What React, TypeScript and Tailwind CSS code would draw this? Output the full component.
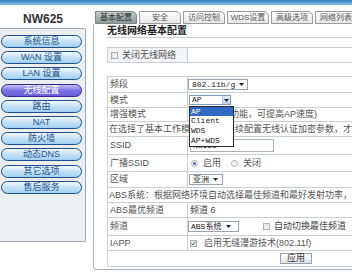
import React from "react";

const sans = "font-['Liberation_Sans','Noto_Sans_CJK_SC',sans-serif]";
const mono = "font-['Liberation_Mono','Noto_Sans_CJK_SC',monospace]";

const menu = ["系统信息", "WAN 设置", "LAN 设置", "无线配置", "路由", "NAT", "防火墙", "动态DNS", "其它选项", "售后服务"];
const tabs = ["基本配置", "安全", "访问控制", "WDS设置", "高级选项", "网络列表"];

function Arrow() {
  return (
    <svg width="5" height="3" viewBox="0 0 5 3" className="shrink-0">
      <path d="M0 0h5L2.5 3z" fill="#222" />
    </svg>
  );
}

function Checkbox({ checked }: { checked?: boolean }) {
  return (
    <span className="w-[7px] h-[7px] border border-[#a9b1b9] bg-gradient-to-br from-[#dfe3e7] to-[#f7f8f9] flex items-center justify-center shrink-0">
      {checked && (
        <svg width="5" height="5" viewBox="0 0 5 5">
          <path d="M0.5 2.5l1.3 1.5L4.5 0.8" stroke="#3a6a3a" strokeWidth="1" fill="none" />
        </svg>
      )}
    </span>
  );
}

function Radio({ checked }: { checked?: boolean }) {
  return (
    <span className="w-[7px] h-[7px] rounded-full border border-[#a9b1b9] bg-[#f2f4f6] flex items-center justify-center shrink-0">
      {checked && <span className="w-[3px] h-[3px] rounded-full bg-[#4b6fa8]" />}
    </span>
  );
}

function Label({ children }: { children: React.ReactNode }) {
  return <div className="w-[80px] shrink-0 border-r border-[#c6ced6] pl-[2px] flex items-center">{children}</div>;
}

export default function App() {
  return (
    <div className={`relative w-[352px] h-[279px] overflow-hidden bg-white text-[9px] leading-none text-[#555] ${sans}`}>
      <div className="h-[5px] bg-gradient-to-b from-[#2b7dbd] to-[#86c0e8]" />
      <div className="flex">
        {/* side menu */}
        <div className="w-[86px] shrink-0">
          <div className="h-[23px] pt-[4px] flex items-center justify-center text-[12px] font-bold text-[#333]">NW625</div>
          <div className="h-[214px] border-y border-r border-[#9ea8b2] bg-[#eceff2] rounded-r-[2px] pt-[6px] pl-[1px] flex flex-col gap-[3.2px]">
            {menu.map((m) => (
              <div
                key={m}
                className={
                  m === "无线配置"
                    ? "h-[13px] w-[81px] rounded-full border border-[#332a8c] bg-gradient-to-b from-[#c3bdf7] via-[#7d72e3] to-[#6a5fd6] text-white flex items-center justify-center"
                    : "h-[13px] w-[81px] rounded-full border border-[#1d4f8c] bg-gradient-to-b from-[#f2f9ff] via-[#c2e1f7] to-[#a2d0f1] text-[#24548c] flex items-center justify-center"
                }
              >
                {m}
              </div>
            ))}
          </div>
        </div>

        {/* main */}
        <div className="flex-1 ml-[7px]">
          <div className="mt-[6px] h-[13px] pl-[2px] flex gap-[2px]">
            {tabs.map((t, i) => (
              <div
                key={t}
                className={
                  i === 0
                    ? "w-[42px] shrink-0 rounded-tr-[5px] border border-[#7d8686] bg-gradient-to-b from-[#c2c9c9] to-[#8f9999] text-[#2a2a2a] text-[8px] flex items-center justify-center"
                    : "w-[42px] shrink-0 rounded-tr-[5px] border border-[#9a9a9a] bg-gradient-to-b from-white to-[#e6e6e6] text-[#555] text-[8px] flex items-center justify-center"
                }
              >
                {t}
              </div>
            ))}
          </div>

          <div className="h-[246px] border-l border-b border-[#a9b1b9] rounded-bl-[4px] pl-[13px]">
            <div className="h-[14px] border-b border-[#c6ced6] flex items-center text-[10px] font-bold text-[#222]">无线网络基本配置</div>

            <div className="mt-[9px] w-[378px] h-[16px] border border-[#c6ced6] flex">
              <div className="w-[80px] shrink-0 border-r border-[#c6ced6] bg-[#f3f4f5] pl-[3px] flex items-center gap-[4px]">
                <Checkbox />
                <span>关闭无线网络</span>
              </div>
              <div className="flex-1" />
            </div>

            <div className="mt-[13px] w-[378px] border-t border-l border-r border-[#c6ced6]">
              <div className="h-[16px] border-b border-[#c6ced6] flex">
                <Label>频段</Label>
                <div className="pl-[0px] flex items-center">
                  <div className={`w-[60px] h-[11px] border border-[#9aa4ae] bg-white flex items-center px-[3px] gap-[4px] text-[8px] text-[#222] ${mono}`}>
                    <span>802.11b/g</span>
                    <Arrow />
                  </div>
                </div>
              </div>

              <div className="h-[15px] border-b border-[#c6ced6] flex">
                <Label>模式</Label>
                <div className="pl-[1px] flex items-center">
                  <div className="relative">
                    <div className={`w-[42px] h-[10px] border border-[#7f9db9] bg-white flex items-center text-[8px] text-[#222] ${mono}`}>
                      <span className="flex-1 pl-[2px]">AP</span>
                      <span className="w-[8px] h-full bg-gradient-to-b from-[#e6eefc] to-[#b9cdf2] border-l border-[#b3c4e0] flex items-center justify-center">
                        <Arrow />
                      </span>
                    </div>
                    <div className={`absolute left-0 top-[11px] z-10 w-[45px] h-[41px] border border-[#2a2a2a] bg-white text-[8px] text-[#222] ${mono}`}>
                      <div className="h-[9px] bg-[#316ac5] text-white flex items-center pl-[1px]">AP</div>
                      <div className="h-[10px] flex items-center pl-[1px]">Client</div>
                      <div className="h-[10px] flex items-center pl-[1px]">WDS</div>
                      <div className="h-[10px] flex items-center pl-[1px]">AP+WDS</div>
                    </div>
                  </div>
                </div>
              </div>

              <div className="h-[14px] border-b border-[#c6ced6] flex">
                <Label>增强模式</Label>
                <div className="pl-[3px] flex items-center whitespace-nowrap">(启用加速功能，可提高AP速度)</div>
              </div>

              <div className="h-[15px] border-b border-[#c6ced6] pl-[1px] flex items-center whitespace-nowrap">
                在选择了基本工作模式后，请继续配置无线认证加密参数，才能使设置生效。
              </div>

              <div className="h-[18px] border-b border-[#c6ced6] flex">
                <Label>SSID</Label>
                <div className="pl-[2px] flex items-center">
                  <div className={`w-[84px] h-[13px] border border-[#a9b1b9] bg-white flex items-center pl-[2px] text-[8px] text-[#222] ${mono}`}>NW625</div>
                </div>
              </div>

              <div className="h-[17px] border-b border-[#c6ced6] flex">
                <Label>广播SSID</Label>
                <div className="pl-[3px] flex items-center gap-[5px]">
                  <Radio checked />
                  <span className="mr-[5px]">启用</span>
                  <Radio />
                  <span>关闭</span>
                </div>
              </div>

              <div className="h-[16px] border-b border-[#c6ced6] flex">
                <Label>区域</Label>
                <div className="pl-[1px] flex items-center">
                  <div className={`w-[34px] h-[11px] border border-[#9aa4ae] bg-white flex items-center px-[3px] gap-[4px] text-[8px] text-[#222] ${mono}`}>
                    <span>亚洲</span>
                    <Arrow />
                  </div>
                </div>
              </div>

              <div className="h-[15px] border-b border-[#c6ced6] pl-[1px] flex items-center whitespace-nowrap">
                ABS系统：根据网络环境自动选择最佳频道和最好发射功率，提高无线性能。
              </div>

              <div className="h-[15px] border-b border-[#c6ced6] flex">
                <Label>ABS最优频道</Label>
                <div className="pl-[2px] flex items-center text-[#444]">频道 6</div>
              </div>

              <div className="h-[18px] border-b border-[#c6ced6] flex">
                <Label>频道</Label>
                <div className="flex items-center">
                  <div className={`w-[51px] h-[11px] border border-[#9aa4ae] bg-white flex items-center px-[2px] gap-[5px] text-[8px] text-[#222] ${mono}`}>
                    <span>ABS系统</span>
                    <Arrow />
                  </div>
                  <span className="ml-[24px] mr-[4px]">
                    <Checkbox />
                  </span>
                  <span className="text-[#444]">自动切换最佳频道</span>
                </div>
              </div>

              <div className="h-[15px] border-b border-[#c6ced6] flex">
                <Label>IAPP</Label>
                <div className="pl-[2px] flex items-center gap-[7px]">
                  <Checkbox checked />
                  <span>启用无缝漫游技术(802.11f)</span>
                </div>
              </div>

              <div className="h-[16px] border-b border-[#c6ced6] flex items-center justify-center">
                <div className="w-[32px] h-[11px] border border-[#9aa4ae] bg-gradient-to-b from-white to-[#dde1e5] flex items-center justify-center text-[#333]">应用</div>
              </div>
            </div>
          </div>
        </div>
      </div>
    </div>
  );
}
